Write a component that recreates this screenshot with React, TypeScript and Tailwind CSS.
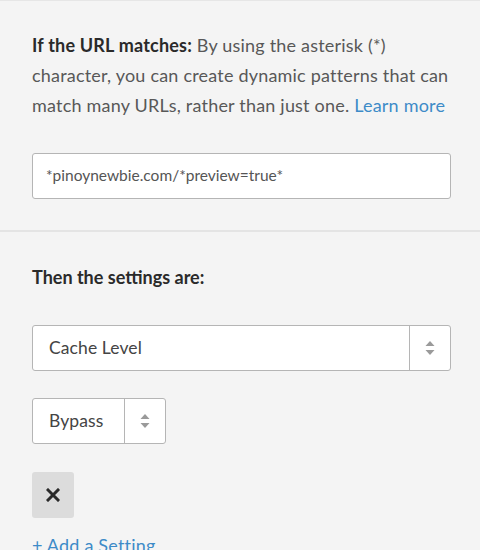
const Arrows = () => (
  <svg width="10" height="16" viewBox="0 0 10 16" className="text-[#9a9a9a]">
    <path d="M5 1 L9.5 6 H0.5 Z" fill="currentColor" />
    <path d="M5 15 L9.5 10 H0.5 Z" fill="currentColor" />
  </svg>
);

const SelectBox = ({ label, className }: any) => (
  <div
    className={`flex h-[46px] bg-white border border-[#b5b5b5] rounded-[3px] ${className}`}
  >
    <div className="flex-1 flex items-center pl-4 pr-4 text-[17.5px] text-[#444] tracking-[0.1px]">
      {label}
    </div>
    <div className="w-[41px] flex items-center justify-center border-l border-[#b5b5b5]">
      <Arrows />
    </div>
  </div>
);

export default function App() {
  return (
    <div
      className="w-[480px] h-[550px] overflow-hidden bg-[#f4f4f4] border-t border-[#e6e6e6]"
      style={{ fontFamily: "Lato, 'Open Sans', sans-serif" }}
    >
      <div className="pl-8 pr-[29px] pt-[29px] pb-[31px]">
        <p className="text-[18px] leading-[30px] text-[#585858] tracking-[0.2px]">
          <span className="font-bold text-[#2a2a2a]">If the URL matches:</span> By
          using the asterisk (*) character, you can create dynamic patterns that
          can match many URLs, rather than just one.{" "}
          <a className="text-[#3d8bc8]">Learn more</a>
        </p>
        <div className="mt-[33px] h-[46px] bg-white border border-[#b5b5b5] rounded-[3px] flex items-center px-[13px] text-[15.5px] text-[#555]">
          *pinoynewbie.com/*preview=true*
        </div>
      </div>
      <div className="h-[2px] bg-[#e4e4e4]" />
      <div className="pl-8 pr-[29px] pt-[30px]">
        <h3 className="text-[18px] leading-[30px] font-bold text-[#2a2a2a] tracking-[0px]">
          Then the settings are:
        </h3>
        <SelectBox label="Cache Level" className="mt-[33px] w-[419px]" />
        <SelectBox label="Bypass" className="mt-[27px] w-[134px]" />
        <button className="mt-[28px] w-[42px] h-[46px] bg-[#dcdcdc] rounded-[3px] flex items-center justify-center">
          <svg width="14" height="14" viewBox="0 0 14 14">
            <path
              d="M2 2 L12 12 M12 2 L2 12"
              stroke="#2a2a2a"
              strokeWidth="3"
              strokeLinecap="square"
            />
          </svg>
        </button>
        <div className="mt-[15px] text-[18px] leading-[24px] text-[#3d8bc8] tracking-[0.2px]">
          + Add a Setting
        </div>
      </div>
    </div>
  );
}
